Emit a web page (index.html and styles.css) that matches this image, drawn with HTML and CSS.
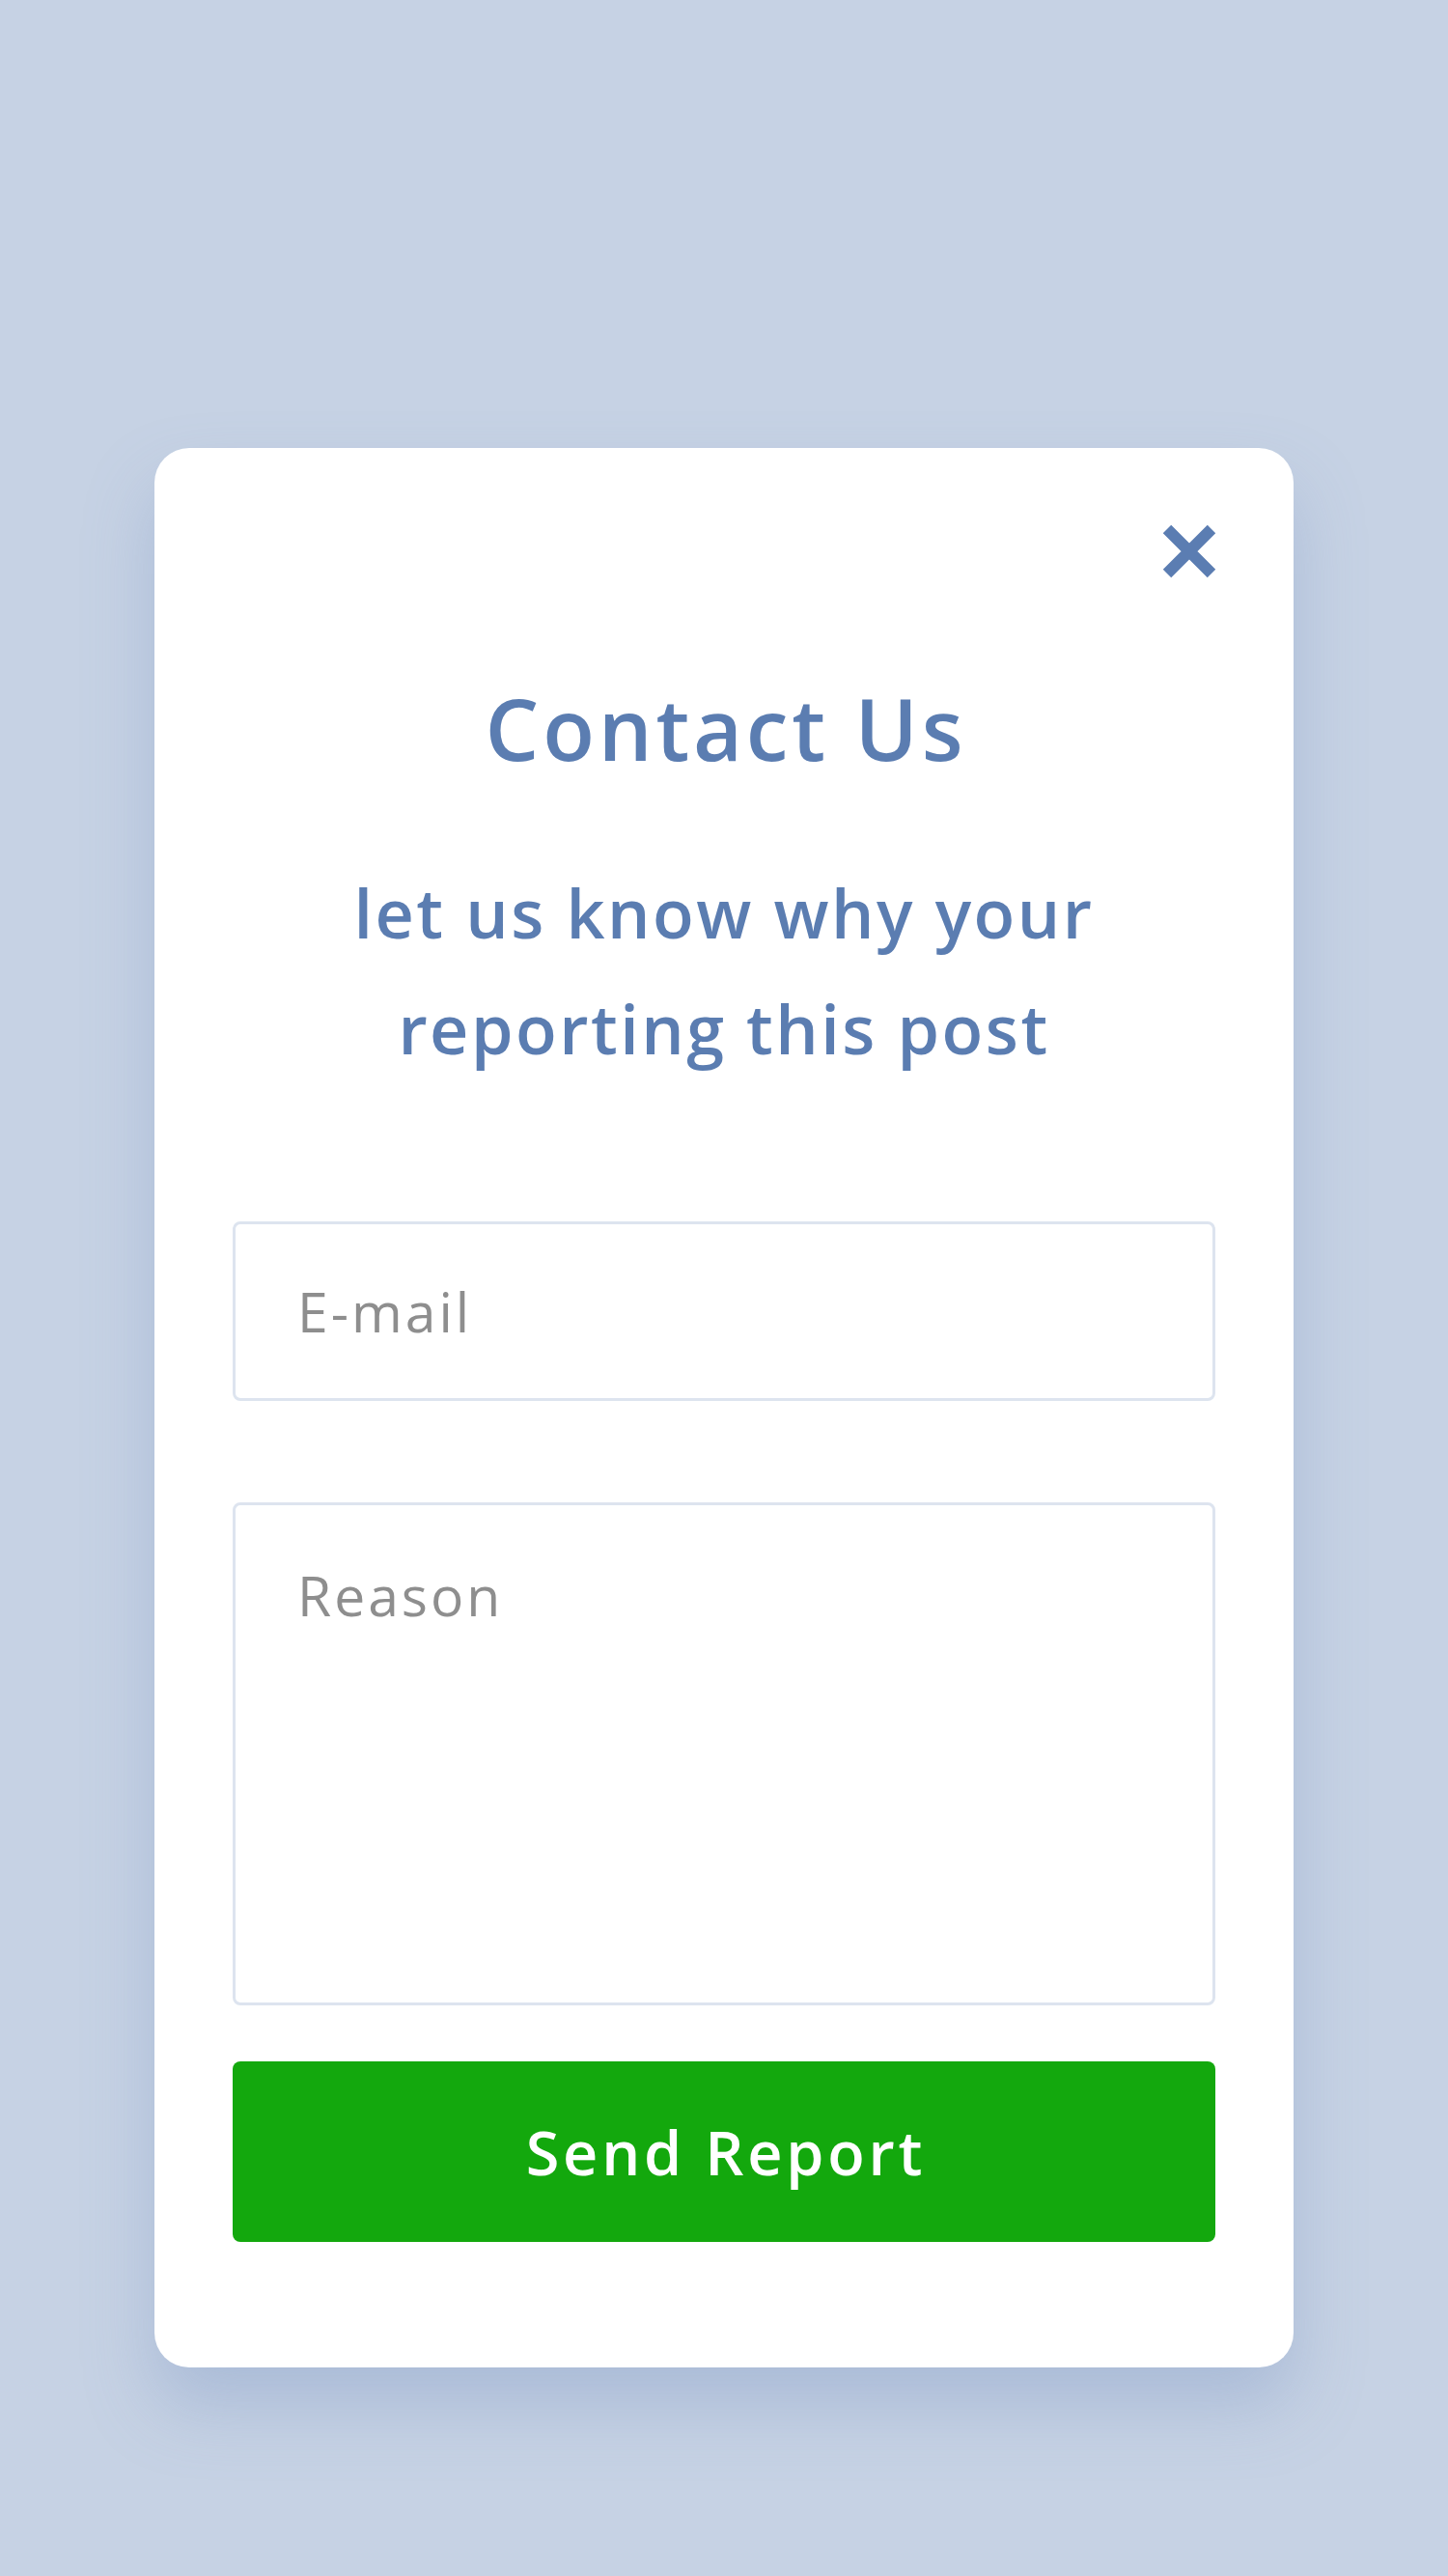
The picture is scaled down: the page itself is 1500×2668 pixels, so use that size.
FILE: index.html
```html
<!DOCTYPE html>
<html lang="en">
<head>
<meta charset="utf-8">
<title>Contact Us</title>
<link rel="stylesheet" href="styles.css">
</head>
<body>
<div class="page">
  <div class="card">
    <div class="close-row">
      <button class="close" aria-label="Close">
        <svg width="56" height="56" viewBox="0 0 56 56"><path d="M5 5 L51 51 M51 5 L5 51" stroke="#5b7db2" stroke-width="12" stroke-linecap="butt" fill="none"/></svg>
      </button>
    </div>
    <h1 class="title">Contact Us</h1>
    <p class="subtitle">let us know why your<br>reporting this post</p>
    <form class="form">
      <input class="field" type="email" placeholder="E-mail">
      <textarea class="field area" placeholder="Reason"></textarea>
      <button class="send" type="button">Send Report</button>
    </form>
  </div>
</div>
</body>
</html>
```

FILE: styles.css
```css
html, body {
  margin: 0;
  padding: 0;
}
body {
  background: #c6d2e4;
  font-family: "Open Sans", "Noto Sans", sans-serif;
}
.page {
  min-height: 2668px;
  padding-top: 464px;
  box-sizing: border-box;
}
.card {
  margin-left: 160px;
  width: 1180px;
  height: 1988px;
  box-sizing: border-box;
  background: #ffffff;
  border-radius: 36px;
  box-shadow: 0 40px 70px rgba(120, 145, 192, 0.35);
  padding: 79px 81px 0 81px;
}
.close-row {
  display: flex;
  justify-content: flex-end;
  margin-right: -1px;
}
.close {
  width: 56px;
  height: 56px;
  padding: 0;
  border: 0;
  background: none;
  display: block;
}
.close svg { display: block; }
.title {
  margin: 105px 0 0 0;
  text-align: center;
  font-size: 88px;
  line-height: 100px;
  font-weight: 600;
  letter-spacing: 3.8px;
  color: #5b7db1;
  text-indent: 4px;
}
.subtitle {
  margin: 81px 0 0 0;
  text-align: center;
  font-size: 70px;
  line-height: 120px;
  font-weight: 600;
  letter-spacing: 2.5px;
  color: #5b7db1;
}
.form {
  margin-top: 140px;
  display: flex;
  flex-direction: column;
}
.field {
  display: block;
  width: 100%;
  box-sizing: border-box;
  border: 3px solid #dde4ef;
  border-radius: 8px;
  background: #fff;
  font-family: "Open Sans", "Noto Sans", sans-serif;
  font-size: 57px;
  color: #555;
  padding: 0 0 0 64px;
  outline: none;
  letter-spacing: 3px;
}
input.field {
  height: 186px;
}
.area {
  margin-top: 105px;
  height: 521px;
  padding-top: 54px;
  line-height: 78px;
  resize: none;
}
.field::placeholder {
  color: #8e8e8e;
  opacity: 1;
}
.send {
  margin-top: 58px;
  height: 187px;
  border: 0;
  border-radius: 8px;
  background: #13a80d;
  color: #ffffff;
  font-family: "Open Sans", "Noto Sans", sans-serif;
  font-size: 63px;
  font-weight: 600;
  letter-spacing: 3.8px;
  text-indent: 4px;
  padding: 0;
}
```
